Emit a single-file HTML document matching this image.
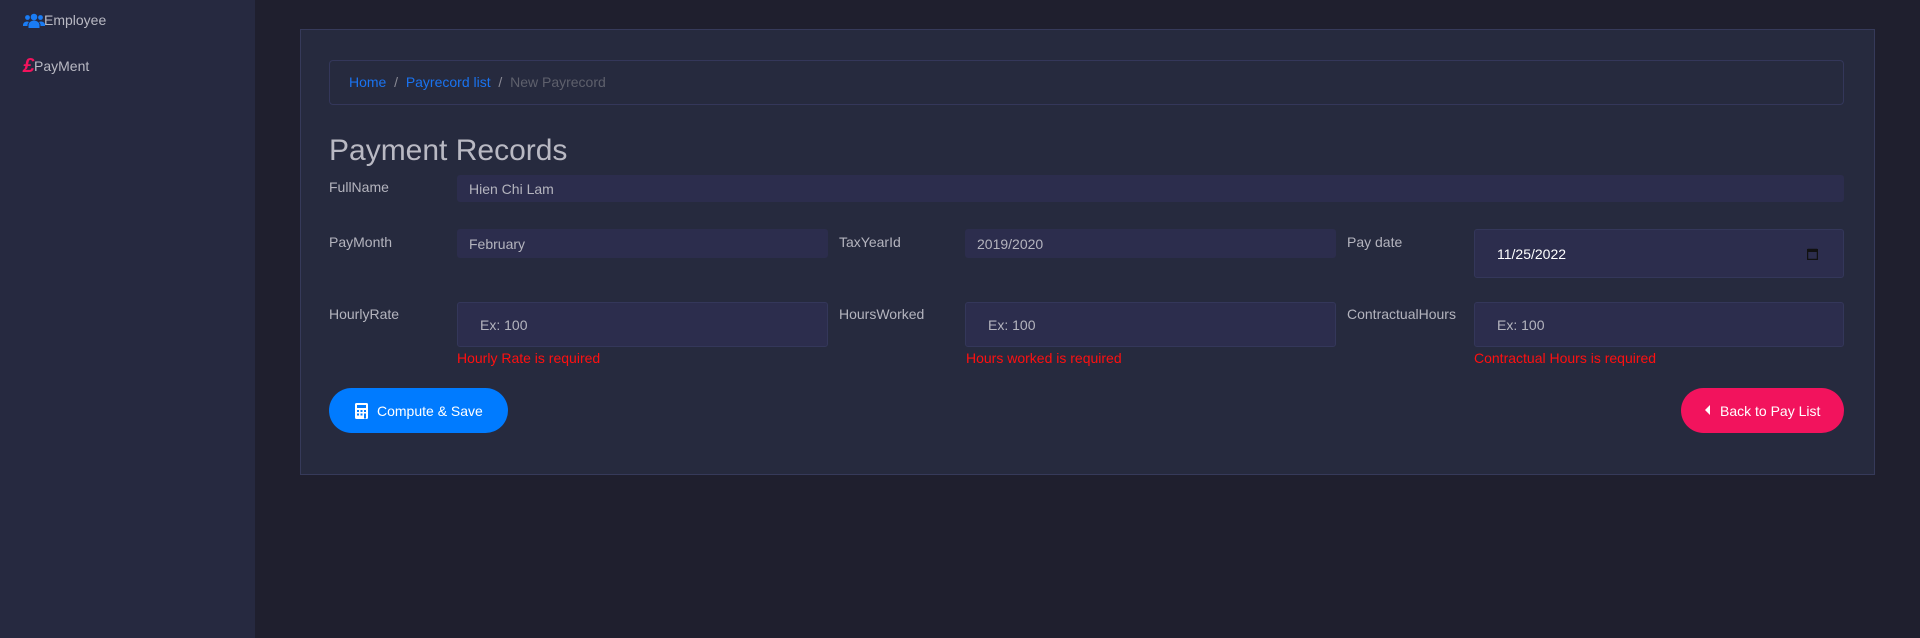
<!DOCTYPE html>
<html><head><meta charset="utf-8"><style>
*{box-sizing:border-box;margin:0;padding:0}
body{width:1920px;height:638px;background:#1f1f2e;font-family:"Liberation Sans",Arial,sans-serif;position:relative;overflow:hidden;color:#b9b9c3}
.side{position:absolute;left:0;top:0;width:255px;height:638px;background:#262940}
.abs{position:absolute}
.lbl{position:absolute;font-size:14px;color:#b4b4be}
.inp{position:absolute;background:#2c2d4d;border:1px solid #34375a;border-radius:3px;font-size:14px;color:#b4b4be}
.err{position:absolute;font-size:14px;color:#ff1010}
</style></head><body>
<div class="side">
  <svg class="abs" style="left:23px;top:13px" width="22" height="15" viewBox="0 0 22 15"><g fill="#1a7cf5"><circle cx="11" cy="4" r="3.3"/><circle cx="4.5" cy="4.5" r="2.4"/><circle cx="17.5" cy="4.5" r="2.4"/><path d="M5.5 15v-3a5.5 4.5 0 0 1 11 0v3z"/><path d="M0 12a4 3.5 0 0 1 6-3a6 5 0 0 0-1.5 3.5V13H0z"/><path d="M22 12a4 3.5 0 0 0-6-3a6 5 0 0 1 1.5 3.5V13H22z"/></g></svg>
  <div class="abs" style="left:44px;top:12px;font-size:14px;color:#b9b9c3">Employee</div>
  <div class="abs" style="left:23px;top:56px;font-size:20px;font-weight:bold;font-style:italic;color:#f2135d;line-height:20px">£</div>
  <div class="abs" style="left:34px;top:58px;font-size:14px;color:#b9b9c3">PayMent</div>
</div>
<div class="abs" style="left:300px;top:29px;width:1575px;height:446px;background:#262a3e;border:1px solid #363a5a"></div>
<div class="abs" style="left:329px;top:60px;width:1515px;height:45px;border:1px solid #34375a;border-radius:4px"></div>
<div class="abs" style="left:349px;top:74px;font-size:14px;color:#8a8a95"><span style="color:#1a73f0">Home</span>&nbsp;&nbsp;/&nbsp;&nbsp;<span style="color:#1a73f0">Payrecord list</span>&nbsp;&nbsp;/&nbsp;&nbsp;<span style="color:#5e606c">New Payrecord</span></div>
<div class="abs" style="left:329px;top:134px;font-size:30px;color:#b9b9c3">Payment Records</div>

<div class="lbl" style="left:329px;top:179px">FullName</div>
<div class="inp" style="left:457px;top:175px;width:1387px;height:27px;border:none;padding:6px 12px">Hien Chi Lam</div>

<div class="lbl" style="left:329px;top:234px">PayMonth</div>
<div class="inp" style="left:457px;top:229px;width:371px;height:29px;border:none;padding:7px 12px">February</div>
<div class="lbl" style="left:839px;top:234px">TaxYearId</div>
<div class="inp" style="left:965px;top:229px;width:371px;height:29px;border:none;padding:7px 12px">2019/2020</div>
<div class="lbl" style="left:1347px;top:234px">Pay date</div>
<div class="inp" style="left:1474px;top:229px;width:370px;height:49px;padding:16px 22px;color:#fff">11/25/2022
  <svg class="abs" style="right:25px;top:18px" width="11" height="12" viewBox="0 0 11 12"><rect x="0.5" y="1.5" width="10" height="10" rx="1" fill="none" stroke="#111" stroke-width="1.5"/><rect x="0" y="1" width="11" height="3" fill="#111"/></svg>
</div>

<div class="lbl" style="left:329px;top:306px">HourlyRate</div>
<div class="inp" style="left:457px;top:302px;width:371px;height:45px;padding:14px 22px">Ex: 100</div>
<div class="err" style="left:457px;top:350px">Hourly Rate is required</div>
<div class="lbl" style="left:839px;top:306px">HoursWorked</div>
<div class="inp" style="left:965px;top:302px;width:371px;height:45px;padding:14px 22px">Ex: 100</div>
<div class="err" style="left:966px;top:350px">Hours worked is required</div>
<div class="lbl" style="left:1347px;top:306px">ContractualHours</div>
<div class="inp" style="left:1474px;top:302px;width:370px;height:45px;padding:14px 22px">Ex: 100</div>
<div class="err" style="left:1474px;top:350px">Contractual Hours is required</div>

<div class="abs" style="left:329px;top:388px;width:179px;height:45px;border-radius:23px;background:#007bff;color:#fff;font-size:14px;line-height:46px;padding-left:48px">Compute &amp; Save
  <svg class="abs" style="left:26px;top:15px" width="13" height="16" viewBox="0 0 13 16"><rect width="13" height="16" rx="1.5" fill="#fff"/><rect x="2" y="2" width="9" height="3" fill="#007bff"/><g fill="#007bff"><rect x="2" y="7" width="2" height="2"/><rect x="5.5" y="7" width="2" height="2"/><rect x="9" y="7" width="2" height="2"/><rect x="2" y="10.5" width="2" height="2"/><rect x="5.5" y="10.5" width="2" height="2"/><rect x="9" y="10.5" width="2" height="5"/></g></svg>
</div>
<div class="abs" style="left:1681px;top:388px;width:163px;height:45px;border-radius:23px;background:#f2135d;color:#fff;font-size:14px;line-height:46px;padding-left:39px">Back to Pay List
  <svg class="abs" style="left:24px;top:17px" width="6" height="10" viewBox="0 0 6 10"><path d="M5 0v10L0 5z" fill="#fff"/></svg>
</div>
</body></html>
